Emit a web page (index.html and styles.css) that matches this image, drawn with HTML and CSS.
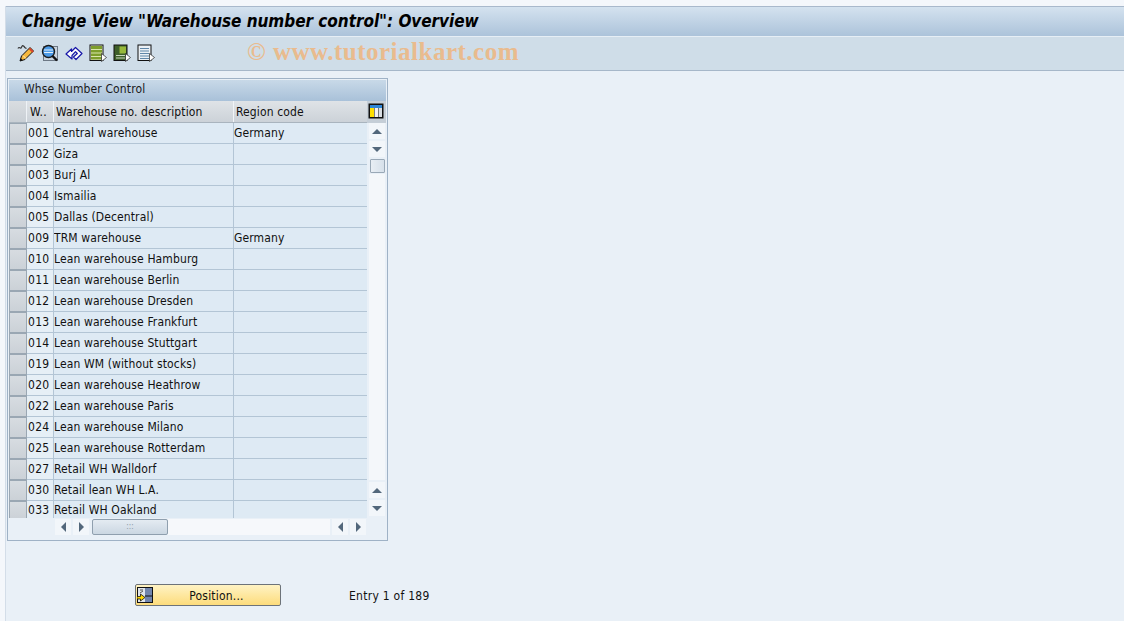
FILE: index.html
```html
<!DOCTYPE html>
<html lang="en">
<head>
<meta charset="utf-8">
<title>Change View</title>
<link rel="stylesheet" href="styles.css">
</head>
<body>
<div class="frame">
  <header class="titlebar"><h1>Change View "Warehouse number control": Overview</h1></header>
  <nav class="toolbar">
    <svg class="tool" viewBox="0 0 18 18"><path d="M1 4.500C2 2 3 5 4 4s1-3 2.500-2S8 5 9.500 4" fill="none" stroke="#333" stroke-width="1.200"/><path d="M3 17l1.500-5L13 3.500l3.500 3.500L8 15.500z" fill="#f5b83d" stroke="#111"/><path d="M12.500 4.500l3.500 3.500" stroke="#d8452e" stroke-width="2"/><path d="M6 11.500l3 3" stroke="#fff2c0"/><path d="M3 17l.8-2.800 2 2z" fill="#111"/></svg>
    <svg class="tool" viewBox="0 0 18 18"><rect x="2.500" y="2.500" width="14" height="14" fill="#c9d3dd" stroke="#6d7885"/><circle cx="7.500" cy="7.500" r="6" fill="#4c9ae6" stroke="#1a1a1a" stroke-width="1.400"/><path d="M3 6h9M3 8.500h9" stroke="#e2f0fb"/><path d="M11.500 12l4.500 4.500" stroke="#111" stroke-width="2.400"/></svg>
    <svg class="tool" viewBox="0 0 18 18"><path d="M1 10l5.500-5v2.500l4-4L17 9.500 11 15.500l-2.500-2.500 3.800-3.500-1.800-1.800L7 11.500V15z" fill="#fff" stroke="#1616a8" stroke-width="1.200" stroke-linejoin="round"/></svg>
    <svg class="tool" viewBox="0 0 18 18"><rect x="1" y="1" width="13" height="15.500" fill="#e8efd8" stroke="#111"/><rect x="2" y="2" width="11" height="13.500" fill="#7e9e2c"/><path d="M2 5.500h11M2 9h11M2 12.500h11" stroke="#d9e6ad" stroke-width="1.200"/><path d="M12.500 9.500l5 4-5 4z" fill="#fff" stroke="#222" stroke-width=".7"/></svg>
    <svg class="tool" viewBox="0 0 18 18"><rect x="1" y="1" width="13" height="15.500" fill="#3e5f2a" stroke="#111"/><rect x="6.500" y="2.500" width="6.500" height="7" fill="#96b83a"/><path d="M3 11.500h9M3 14h9" stroke="#c9d8bd"/><path d="M12.500 9.500l5 4-5 4z" fill="#fff" stroke="#222" stroke-width=".7"/></svg>
    <svg class="tool" viewBox="0 0 18 18"><rect x="1" y="1" width="13" height="15.500" fill="#eaf0f5" stroke="#111"/><path d="M3 4.500h9M3 7h9M3 9.500h9M3 12h9M3 14.500h9" stroke="#5f86a8" stroke-width="1.200"/><path d="M12.500 9.500l5 4-5 4z" fill="#fff" stroke="#222" stroke-width=".7"/></svg>
    <span class="watermark">© www.tutorialkart.com</span>
  </nav>
  <main class="content">
    <section class="panel">
      <div class="panel-title">Whse Number Control</div>
      <div class="grid-wrap">
        <div class="grid-main">
          <div class="row head">
            <span class="sel"></span>
            <span class="c-num">W..</span>
            <span class="c-desc">Warehouse no. description</span>
            <span class="c-reg">Region code</span>
          </div>
          <div class="rows">
            <div class="row"><span class="sel"></span><span class="c-num">001</span><span class="c-desc">Central warehouse</span><span class="c-reg">Germany</span></div>
            <div class="row"><span class="sel"></span><span class="c-num">002</span><span class="c-desc">Giza</span><span class="c-reg"></span></div>
            <div class="row"><span class="sel"></span><span class="c-num">003</span><span class="c-desc">Burj Al</span><span class="c-reg"></span></div>
            <div class="row"><span class="sel"></span><span class="c-num">004</span><span class="c-desc">Ismailia</span><span class="c-reg"></span></div>
            <div class="row"><span class="sel"></span><span class="c-num">005</span><span class="c-desc">Dallas (Decentral)</span><span class="c-reg"></span></div>
            <div class="row"><span class="sel"></span><span class="c-num">009</span><span class="c-desc">TRM warehouse</span><span class="c-reg">Germany</span></div>
            <div class="row"><span class="sel"></span><span class="c-num">010</span><span class="c-desc">Lean warehouse Hamburg</span><span class="c-reg"></span></div>
            <div class="row"><span class="sel"></span><span class="c-num">011</span><span class="c-desc">Lean warehouse Berlin</span><span class="c-reg"></span></div>
            <div class="row"><span class="sel"></span><span class="c-num">012</span><span class="c-desc">Lean warehouse Dresden</span><span class="c-reg"></span></div>
            <div class="row"><span class="sel"></span><span class="c-num">013</span><span class="c-desc">Lean warehouse Frankfurt</span><span class="c-reg"></span></div>
            <div class="row"><span class="sel"></span><span class="c-num">014</span><span class="c-desc">Lean warehouse Stuttgart</span><span class="c-reg"></span></div>
            <div class="row"><span class="sel"></span><span class="c-num">019</span><span class="c-desc">Lean WM (without stocks)</span><span class="c-reg"></span></div>
            <div class="row"><span class="sel"></span><span class="c-num">020</span><span class="c-desc">Lean warehouse Heathrow</span><span class="c-reg"></span></div>
            <div class="row"><span class="sel"></span><span class="c-num">022</span><span class="c-desc">Lean warehouse Paris</span><span class="c-reg"></span></div>
            <div class="row"><span class="sel"></span><span class="c-num">024</span><span class="c-desc">Lean warehouse Milano</span><span class="c-reg"></span></div>
            <div class="row"><span class="sel"></span><span class="c-num">025</span><span class="c-desc">Lean warehouse Rotterdam</span><span class="c-reg"></span></div>
            <div class="row"><span class="sel"></span><span class="c-num">027</span><span class="c-desc">Retail WH Walldorf</span><span class="c-reg"></span></div>
            <div class="row"><span class="sel"></span><span class="c-num">030</span><span class="c-desc">Retail lean WH L.A.</span><span class="c-reg"></span></div>
            <div class="row last"><span class="sel"></span><span class="c-num">033</span><span class="c-desc">Retail WH Oakland</span><span class="c-reg"></span></div>
          </div>
        </div>
        <div class="grid-side">
          <div class="col-config">
            <svg viewBox="0 0 16 16" width="16" height="16"><rect x=".5" y=".5" width="15" height="15" fill="#111"/><rect x="2" y="2" width="12" height="3" fill="#2e86d8"/><rect x="2" y="5" width="4" height="9" fill="#ffe000"/><rect x="6.500" y="5" width="3.500" height="9" fill="#f2f2f2"/><rect x="10.500" y="5" width="3.500" height="9" fill="#d8dde2"/></svg>
          </div>
          <div class="vscroll">
            <span class="sbtn"><i class="arr up"></i></span>
            <span class="sbtn"><i class="arr down"></i></span>
            <span class="vthumb"></span>
            <span class="vtrack"></span>
            <span class="sbtn"><i class="arr up"></i></span>
            <span class="sbtn"><i class="arr down"></i></span>
          </div>
        </div>
      </div>
      <div class="hscroll">
        <span class="sbtn"><i class="arr left"></i></span>
        <span class="sbtn"><i class="arr right"></i></span>
        <span class="hthumb"><b>:::</b></span>
        <span class="htrack"></span>
        <span class="sbtn"><i class="arr left"></i></span>
        <span class="sbtn"><i class="arr right"></i></span>
      </div>
    </section>
    <div class="actions">
      <button class="pos-btn" type="button">
        <svg viewBox="0 0 16 16" width="16" height="16"><rect x=".5" y=".5" width="15" height="15" fill="#dfe4ea" stroke="#111"/><rect x="8" y="1" width="7" height="14" fill="#7084ad"/><path d="M8 9h7" stroke="#111"/><path d="M3 3h3M3 6l3-2" stroke="#555" fill="none"/><path d="M0 9.500h3.500V7L8 10.500 3.500 14v-2H0z" fill="#ffd800" stroke="#111" stroke-width=".8"/></svg>
        <span>Position...</span>
      </button>
      <span class="entry">Entry 1 of 189</span>
    </div>
  </main>
</div>
</body>
</html>
```
FILE: styles.css
```css
* { box-sizing: border-box; }
html, body { margin: 0; height: 100%; }
body {
  width: 1124px;
  height: 621px;
  overflow: hidden;
  background: #f4f7fb;
  font-family: "DejaVu Sans", "Liberation Sans", sans-serif;
  font-stretch: condensed;
  font-size: 12px;
  letter-spacing: .12px;
  color: #111;
  padding: 6px 0 0 5px;
}
.frame { height: 615px; display: flex; flex-direction: column; background: #e9f0f7; border-left: 1px solid #d3dde8; }
.titlebar {
  height: 31px;
  flex: none;
  border-top: 1px solid #a9b9cc;
  border-bottom: 1px solid #e6eef5;
  background: linear-gradient(#d4e2ef, #acc3da);
  padding: 0 0 2px 16px;
  display: flex;
  align-items: center;
}
.titlebar h1 {
  margin: 0;
  font: italic bold 17px "DejaVu Sans", sans-serif;
  font-stretch: condensed;
  color: #000;
  letter-spacing: -.04px;
  white-space: nowrap;
}
.toolbar {
  height: 34px;
  flex: none;
  background: #cfdde8;
  border-bottom: 1px solid #a6b7c9;
  display: flex;
  align-items: center;
  padding: 0 0 2px 11px;
  gap: 6px;
  position: relative;
}
.tool { width: 18px; height: 18px; flex: none; }
.watermark {
  position: absolute;
  left: 241px;
  top: 1px;
  font: bold 25px "Liberation Serif", serif;
  color: #e9bb8e;
  letter-spacing: .5px;
  white-space: nowrap;
}
.content { flex: 1; display: flex; flex-direction: column; padding: 7px 0 0 1px; }
.panel {
  width: 381px;
  height: 463px;
  flex: none;
  border: 1px solid #9fb2c6;
  display: flex;
  flex-direction: column;
  padding: 1px;
}
.panel-title {
  height: 21px;
  flex: none;
  background: linear-gradient(#c8d9e8, #a9c1d9);
  padding-left: 15px;
  line-height: 19px;
  color: #1a1a1a;
}
.grid-wrap { display: flex; height: 417px; flex: none; }
.grid-main { width: 358px; flex: none; display: flex; flex-direction: column; }
.rows { flex: 1; overflow: hidden; }
.row { display: flex; height: 21px; background: #deeaf4; border-bottom: 1px solid #b3c5d5; }
.row.last { height: 18px; border-bottom: 0; }
.row.last span { line-height: 18px; }
.sel {
  width: 18px;
  flex: none;
  background: linear-gradient(#d7dce1, #cbd1d7);
  border: 1px solid #9aa7b3;
  margin-bottom: -1px;
}
.c-num { width: 27px; flex: none; padding-left: 1px; line-height: 20px; background: #e6eff6; border-right: 1px solid #b3c5d5; white-space: nowrap; letter-spacing: .3px; }
.c-desc { width: 180px; flex: none; padding-left: 0; line-height: 20px; border-right: 1px solid #b3c5d5; white-space: nowrap; overflow: hidden; }
.c-reg { flex: 1; line-height: 20px; white-space: nowrap; overflow: hidden; }
.row.head { height: 22px; border-bottom: 1px solid #a9b4be; background: linear-gradient(#dfe3e7, #ccd2d8); }
.row.head .sel { border: 0; border-right: 1px solid #eef2f6; background: linear-gradient(#d9dde1, #c9cfd5); margin: 0; }
.row.head .c-num { background: transparent; padding-left: 3px; border-right-color: #f1f4f7; line-height: 22px; }
.row.head .c-desc { padding-left: 2px; border-right-color: #f1f4f7; line-height: 22px; }
.row.head .c-reg { padding-left: 2px; line-height: 22px; }
.grid-side { flex: 1; display: flex; flex-direction: column; }
.col-config {
  height: 22px;
  flex: none;
  background: #c5ced7;
  padding: 2px 0 0 1px;
}
.col-config svg { display: block; }
.vscroll { flex: 1; display: flex; flex-direction: column; align-items: center; margin-left: 1px; }
.sbtn {
  width: 16px;
  height: 16px;
  background: #f2f6fa;
  display: flex;
  align-items: center;
  justify-content: center;
  flex: none;
}
.vscroll .sbtn { margin-bottom: 2px; }
.arr { width: 0; height: 0; border: 5px solid transparent; display: block; }
.arr.up { border-top: 0; border-bottom: 5px solid #52677b; }
.arr.down { border-bottom: 0; border-top: 5px solid #52677b; }
.arr.left { border-left: 0; border-right: 5px solid #52677b; }
.arr.right { border-right: 0; border-left: 5px solid #52677b; }
.vthumb {
  width: 15px;
  height: 14px;
  flex: none;
  background: linear-gradient(90deg, #e8eef4, #d6e0ea);
  border: 1px solid #99a8b6;
  border-radius: 1px;
}
.vtrack { flex: 1; width: 16px; background: #f4f7fa; margin: 1px 0 2px; }
.hscroll { height: 19px; flex: none; display: flex; align-items: center; padding: 0 0 1px 46px; }
.hscroll .sbtn { margin-right: 2px; }
.hscroll .sbtn:nth-child(2) { margin-right: 3px; }
.hthumb {
  width: 76px;
  height: 16px;
  flex: none;
  background: linear-gradient(#e4ebf2, #cbd7e2);
  border: 1px solid #8f9fae;
  border-radius: 2px;
  text-align: center;
  line-height: 13px;
  font-size: 8px;
  color: #8b98a5;
}
.hthumb b { font-weight: normal; }
.htrack { width: 162px; height: 16px; flex: none; background: #f6f8fb; margin-right: 2px; }
.actions { display: flex; align-items: center; margin-top: 43px; padding-left: 128px; height: 22px; }
.pos-btn {
  width: 146px;
  height: 22px;
  flex: none;
  position: relative;
  background: linear-gradient(#fff3c4, #fddc7c);
  border: 1px solid #6d7379;
  border-radius: 2px;
  padding: 2px 0 0;
  display: flex;
  align-items: center;
  justify-content: center;
  font: inherit;
  letter-spacing: .2px;
  color: #111;
}
.pos-btn svg { position: absolute; left: 1px; top: 2px; }
.pos-btn span { margin-left: 17px; }
.entry { margin-left: 68px; padding-top: 2px; letter-spacing: .27px; }
```
